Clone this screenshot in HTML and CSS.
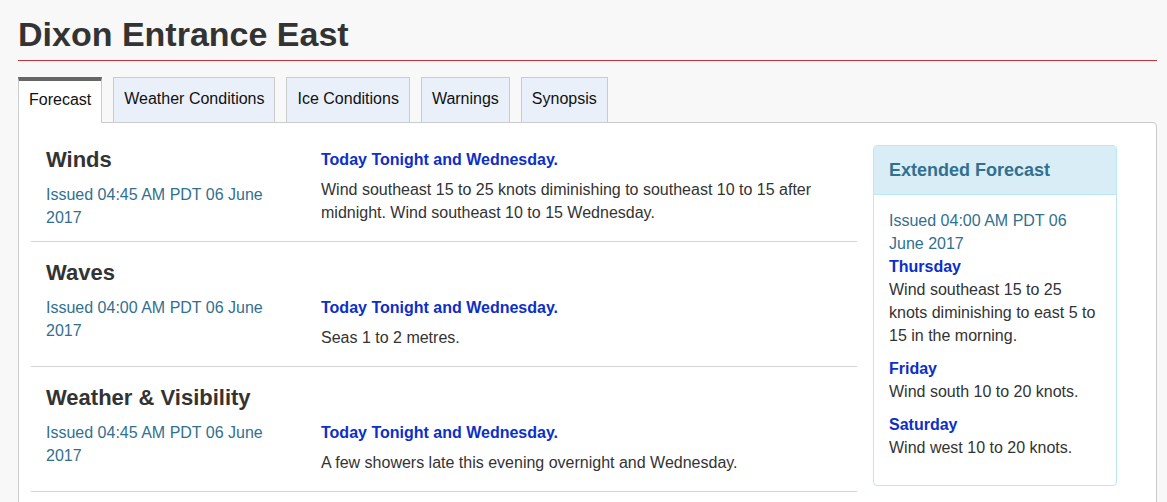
FILE: index.html
```html
<!DOCTYPE html>
<html>

<head>
	<meta charset="UTF-8">
	<title>Dixon Entrance East</title>
	<meta name="viewport" content="width=device-width, initial-scale=1.0">
	<link rel="stylesheet" href="styles.css">
</head>

<body>
	<h1 class="page-title">Dixon Entrance East</h1>

	<ul class="tabs">
		<li class="tab active">Forecast</li>
		<li class="tab">Weather Conditions</li>
		<li class="tab">Ice Conditions</li>
		<li class="tab">Warnings</li>
		<li class="tab">Synopsis</li>
	</ul>

	<div class="tab-panel">
		<div class="forecast">
			<div class="rows">
				<div class="row">
					<div class="row-label">
						<h2>Winds</h2>
						<p class="issued">Issued 04:45 AM PDT 06 June 2017</p>
					</div>
					<div class="row-body">
						<h3>Today Tonight and Wednesday.</h3>
						<p>Wind southeast 15 to 25 knots diminishing to southeast 10 to 15 after midnight. Wind southeast 10 to 15 Wednesday.</p>
					</div>
				</div>
				<div class="row">
					<div class="row-label">
						<h2>Waves</h2>
						<p class="issued">Issued 04:00 AM PDT 06 June 2017</p>
					</div>
					<div class="row-body shifted">
						<h3>Today Tonight and Wednesday.</h3>
						<p>Seas 1 to 2 metres.</p>
					</div>
				</div>
				<div class="row">
					<div class="row-label">
						<h2>Weather &amp; Visibility</h2>
						<p class="issued">Issued 04:45 AM PDT 06 June 2017</p>
					</div>
					<div class="row-body shifted">
						<h3>Today Tonight and Wednesday.</h3>
						<p>A few showers late this evening overnight and Wednesday.</p>
					</div>
				</div>
			</div>

			<div class="extended">
				<div class="extended-head">Extended Forecast</div>
				<div class="extended-body">
					<p class="issued">Issued 04:00 AM PDT 06 June 2017</p>
					<div class="day">
						<h3>Thursday</h3>
						<p>Wind southeast 15 to 25 knots diminishing to east 5 to 15 in the morning.</p>
					</div>
					<div class="day">
						<h3>Friday</h3>
						<p>Wind south 10 to 20 knots.</p>
					</div>
					<div class="day">
						<h3>Saturday</h3>
						<p>Wind west 10 to 20 knots.</p>
					</div>
				</div>
			</div>
		</div>
	</div>
</body>

</html>
```

FILE: styles.css
```css
body {
	font-family: "Liberation Sans", Arial, sans-serif;
	font-size: 16px;
	line-height: 23px;
	color: #333;
	background: #f8f8f8;
	margin: 0;
	padding: 0 10px 0 18px;
}

p {
	margin: 0;
}

.page-title {
	font-size: 34px;
	line-height: 35px;
	font-weight: bold;
	margin: 17px 0 16px;
	padding-bottom: 8px;
	border-bottom: 1px solid #c1343a;
}

.tabs {
	list-style: none;
	margin: 0;
	padding: 0;
	display: flex;
	gap: 11px;
	height: 45px;
}

.tab {
	box-sizing: border-box;
	height: 45px;
	padding: 0 10px;
	line-height: 41px;
	color: #111;
	background: #eaf0fa;
	border: 1px solid #cbcbcb;
	border-bottom: none;
}

.tab.active {
	height: 46px;
	background: #fff;
	border-top: 4px solid #666;
	line-height: 37px;
	position: relative;
	z-index: 1;
}

.tab-panel {
	background: #fff;
	border: 1px solid #cbcbcb;
	border-radius: 0 4px 0 0;
	padding: 6px 39px 20px 12px;
}

.forecast {
	display: grid;
	grid-template-columns: 826px 1fr;
	gap: 16px;
	align-items: start;
}

.row {
	display: grid;
	grid-template-columns: 250px 1fr;
	gap: 25px;
	padding: 19px 15px 12px;
	border-bottom: 1px solid #d3d3d3;
}

.row h2 {
	font-size: 22px;
	line-height: 24px;
	margin: 0 0 11px;
}

.issued {
	color: #31708f;
}

h3 {
	font-size: 16px;
	line-height: 23px;
	color: #0c2fc8;
	margin: 0;
}

.row-body {
	padding-bottom: 5px;
}

.row-body h3 {
	margin-bottom: 7px;
}

.row-body.shifted {
	padding-top: 35px;
}

.extended {
	margin-top: 16px;
	border: 1px solid #bce8f1;
	border-radius: 4px;
}

.extended-head {
	background: #d9edf7;
	color: #31708f;
	font-size: 18px;
	line-height: 20px;
	font-weight: bold;
	padding: 14px 15px;
	border-bottom: 1px solid #bce8f1;
	border-radius: 3px 3px 0 0;
}

.extended-body {
	padding: 14px 15px 16px;
}

.day {
	margin-bottom: 10px;
}
```
